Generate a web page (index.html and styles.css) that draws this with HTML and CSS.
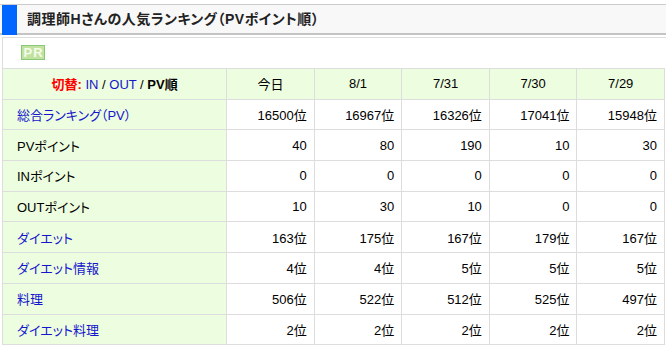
FILE: index.html
```html
<!DOCTYPE html>
<html lang="ja">
<head>
<meta charset="utf-8">
<link rel="stylesheet" href="styles.css">
</head>
<body>
<div class="page">
  <div class="heading">
    <span class="mark"></span>
    <h2 class="title">調理師Hさんの人気ランキング（PVポイント順）</h2>
  </div>
  <div class="box">
    <div class="pr-row"><span class="pr">PR</span></div>
    <table class="rank">
      <thead>
        <tr>
          <th class="switch"><span class="red">切替:</span> <a class="lnk">IN</a> / <a class="lnk">OUT</a> / <b>PV順</b></th>
          <th>今日</th>
          <th>8/1</th>
          <th>7/31</th>
          <th>7/30</th>
          <th>7/29</th>
        </tr>
      </thead>
      <tbody>
        <tr><th class="lnk">総合ランキング（PV）</th><td>16500位</td><td>16967位</td><td>16326位</td><td>17041位</td><td>15948位</td></tr>
        <tr><th>PVポイント</th><td>40</td><td>80</td><td>190</td><td>10</td><td>30</td></tr>
        <tr><th>INポイント</th><td>0</td><td>0</td><td>0</td><td>0</td><td>0</td></tr>
        <tr><th>OUTポイント</th><td>10</td><td>30</td><td>10</td><td>0</td><td>0</td></tr>
        <tr><th class="lnk">ダイエット</th><td>163位</td><td>175位</td><td>167位</td><td>179位</td><td>167位</td></tr>
        <tr><th class="lnk">ダイエット情報</th><td>4位</td><td>4位</td><td>5位</td><td>5位</td><td>5位</td></tr>
        <tr><th class="lnk">料理</th><td>506位</td><td>522位</td><td>512位</td><td>525位</td><td>497位</td></tr>
        <tr><th class="lnk">ダイエット料理</th><td>2位</td><td>2位</td><td>2位</td><td>2位</td><td>2位</td></tr>
      </tbody>
    </table>
  </div>
</div>
</body>
</html>
```

FILE: styles.css
```css
html, body {
  margin: 0;
  padding: 0;
  background: #fff;
  overflow: hidden;
}
body {
  font-family: "Liberation Sans", "Noto Sans CJK JP", sans-serif;
  font-size: 13px;
  color: #000;
  font-feature-settings: "palt";
}
.page {
  padding: 4px 0 0 2px;
}
.heading {
  display: flex;
  align-items: stretch;
  height: 28px;
  background: #f8f8f8;
  border-top: 1px solid #ccc;
  border-bottom: 2px solid #c4c4c4;
  margin-left: -2px;
  padding-left: 2px;
}
.mark {
  width: 15px;
  background: #0066ff;
  margin-bottom: -2px;
}
.title {
  margin: 0 0 0 10px;
  font-size: 14px;
  font-weight: bold;
  color: #222;
  line-height: 28px;
  letter-spacing: 0.5px;
}
.box {
  margin-top: 2px;
  border-top: 1px solid #ddd;
  border-left: 1px solid #ddd;
}
.pr-row {
  height: 30px;
  padding: 7px 0 0 18px;
  box-sizing: border-box;
}
.pr {
  display: inline-block;
  width: 24px;
  height: 15px;
  box-sizing: border-box;
  background: #c2e2a0;
  border: 1px solid #88c878;
  color: #f4fcea;
  font-weight: bold;
  font-size: 13px;
  line-height: 13px;
  text-align: center;
  letter-spacing: 1px;
  text-indent: 1px;
}
.rank {
  border-collapse: collapse;
  margin-left: -1px;
  width: 663px;
  table-layout: fixed;
}
.rank th, .rank td {
  border: 1px solid #ddd;
  height: 29.7px;
  padding: 0 7px 0 14px;
  font-weight: normal;
  white-space: nowrap;
}
.rank th {
  background: #edfddf;
  text-align: left;
}
.rank thead th {
  text-align: center;
  padding: 0;
  width: 86.5px;
}
.rank thead th.switch {
  width: 223px;
}
.rank td {
  text-align: right;
  background: #fff;
}
.red {
  color: #ff0000;
  font-weight: bold;
}
.lnk {
  color: #1515cc;
}
b {
  font-weight: bold;
}
```
